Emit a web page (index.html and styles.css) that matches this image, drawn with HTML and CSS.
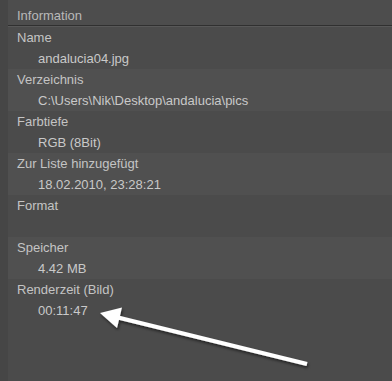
FILE: index.html
```html
<!DOCTYPE html>
<html>

<head>
	<meta charset="utf-8">
	<title>Information</title>
	<link rel="stylesheet" href="styles.css">
</head>

<body>
	<div id="info">
		<div class="head">Information</div>
		<ul class="props">
			<li>
				<div class="label">Name</div>
				<div class="value">andalucia04.jpg</div>
			</li>
			<li>
				<div class="label">Verzeichnis</div>
				<div class="value">C:\Users\Nik\Desktop\andalucia\pics</div>
			</li>
			<li>
				<div class="label">Farbtiefe</div>
				<div class="value">RGB (8Bit)</div>
			</li>
			<li>
				<div class="label">Zur Liste hinzugefügt</div>
				<div class="value">18.02.2010, 23:28:21</div>
			</li>
			<li>
				<div class="label">Format</div>
				<div class="value"></div>
			</li>
			<li>
				<div class="label">Speicher</div>
				<div class="value">4.42 MB</div>
			</li>
			<li>
				<div class="label">Renderzeit (Bild)</div>
				<div class="value">00:11:47</div>
			</li>
		</ul>

		<!-- Pfeil über dem Panel -->
		<svg class="arrow" width="392" height="381" viewBox="0 0 392 381">
			<defs>
				<filter id="shadow" x="-20%" y="-50%" width="140%" height="200%">
					<feDropShadow dx="1" dy="2" stdDeviation="1.6" flood-color="#000" flood-opacity="0.55" />
				</filter>
			</defs>
			<g filter="url(#shadow)" fill="#fff">
				<line x1="307" y1="364" x2="116" y2="317" stroke="#fff" stroke-width="4" />
				<polygon points="100,313 122,307.5 117,328" />
			</g>
		</svg>
	</div>
</body>

</html>
```

FILE: styles.css
```css
* {
	margin: 0;
	padding: 0;
}

ul {
	list-style: none;
}

body {
	background: #464646;
	font-family: "Liberation Sans", Arial, sans-serif;
	font-size: 13px;
	color: #c4c4c4;
	width: 392px;
	height: 381px;
	overflow: hidden;
}

#info {
	position: relative;
	margin-left: 8px;
	height: 381px;
	background: #4b4b4b;
}

#info .head {
	height: 18px;
	line-height: 18px;
	padding: 7px 0 0 9px;
	background: #4d4d4d;
	color: #b9b9b9;
	border-bottom: 1px solid #303030;
	box-shadow: 0 1px 0 #585858;
}

#info .props {
	padding-top: 1px;
}

#info .props li {
	line-height: 21px;
	height: 42px;
	background: #4b4b4b;
}

/* jede zweite Gruppe etwas heller */
#info .props li:nth-child(even) {
	background: #505050;
}

#info .label {
	padding-left: 9px;
	height: 21px;
}

#info .value {
	padding-left: 30px;
	height: 21px;
	color: #c9c9c9;
}

#info .arrow {
	position: absolute;
	left: -8px;
	top: 0;
}
```
